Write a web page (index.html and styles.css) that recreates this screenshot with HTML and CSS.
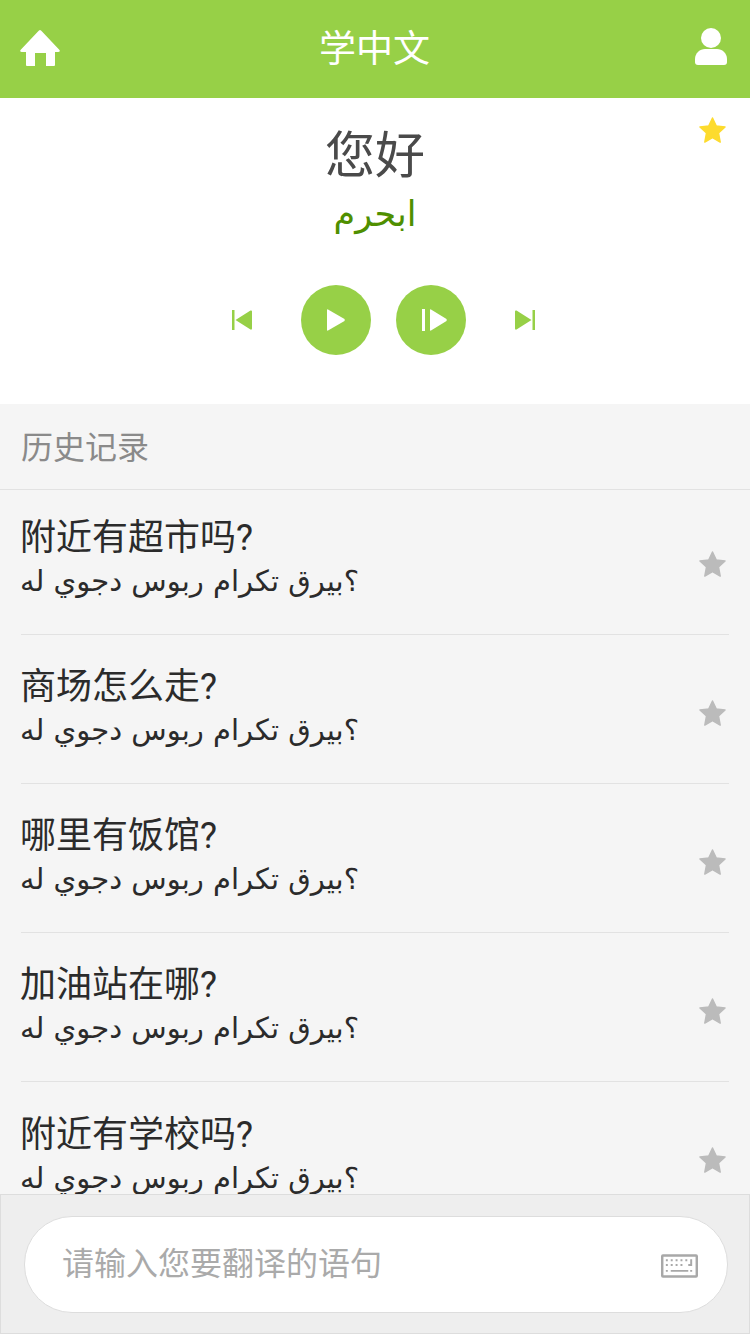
FILE: index.html
```html
<!DOCTYPE html>
<html lang="zh-CN">
<head>
  <meta charset="UTF-8">
  <title>学中文</title>
  <link rel="stylesheet" href="styles.css">
</head>
<body>
  <header class="topbar">
    <svg class="home-icon" viewBox="0 0 40 36"><path d="M20 0 Q21 0 22 1.500 L39.500 20 Q40.500 22 38 22 L35 22 L35 35 Q35 36 34 36 L26 36 L26 23 L15 23 L15 36 L7 36 Q6 36 6 35 L6 22 L2 22 Q-.5 22 .5 20 L18 1.500 Q19 0 20 0 Z" fill="#fff"/></svg>
    <h1 class="topbar-title">学中文</h1>
    <svg class="user-icon" viewBox="0 0 34 38"><ellipse cx="17" cy="10" rx="10" ry="10" fill="#fff"/><path d="M1 31 C1 25 6 21 11 21 L23 21 C28 21 33 25 33 31 L33 34 Q33 37 30 37 L4 37 Q1 37 1 34 Z" fill="#fff"/></svg>
  </header>

  <section class="current">
    <svg class="star star-on" viewBox="-1 -1 28 28"><path d="M13 0 L16.800 8.200 L26 9.400 L19.200 15.500 L21 25 L13 20.400 L5 25 L6.800 15.500 L0 9.400 L9.200 8.200 Z"/></svg>
    <div class="word">您好</div>
    <div class="word-ar arabic">مرحبا</div>
    <div class="controls">
      <svg class="skip" viewBox="0 0 20 20"><path d="M0 0 H2.500 V20 H0 Z M3.500 10 L18.500 .5 Q20 0 20 1.500 V18.500 Q20 20 18.500 19.500 Z"/></svg>
      <button class="round-btn"><svg viewBox="0 0 18 22"><path d="M0 1 Q0 0 1 .5 L17.500 10 Q18 11 17.500 12 L1 21.500 Q0 22 0 21 Z"/></svg></button>
      <button class="round-btn"><svg class="wide" viewBox="0 0 25 22"><path d="M0 0 H3 V22 H0 Z M8 1 Q8 0 9 .5 L24.500 10 Q25 11 24.500 12 L9 21.500 Q8 22 8 21 Z"/></svg></button>
      <svg class="skip" viewBox="0 0 20 20"><path d="M20 0 H17.500 V20 H20 Z M16.500 10 L1.500 .5 Q0 0 0 1.500 V18.500 Q0 20 1.500 19.500 Z"/></svg>
    </div>
  </section>

  <section class="history">
    <div class="history-head">历史记录</div>
    <ul class="history-list">
      <li class="row">
        <div class="row-text"><div class="row-cn">附近有超市吗?</div><div class="row-ar arabic">هل يوجد سوبر ماركت قريب؟</div></div>
        <svg class="star" viewBox="-1 -1 28 28"><path d="M13 0 L16.800 8.200 L26 9.400 L19.200 15.500 L21 25 L13 20.400 L5 25 L6.800 15.500 L0 9.400 L9.200 8.200 Z"/></svg>
      </li>
      <li class="row">
        <div class="row-text"><div class="row-cn">商场怎么走?</div><div class="row-ar arabic">هل يوجد سوبر ماركت قريب؟</div></div>
        <svg class="star" viewBox="-1 -1 28 28"><path d="M13 0 L16.800 8.200 L26 9.400 L19.200 15.500 L21 25 L13 20.400 L5 25 L6.800 15.500 L0 9.400 L9.200 8.200 Z"/></svg>
      </li>
      <li class="row">
        <div class="row-text"><div class="row-cn">哪里有饭馆?</div><div class="row-ar arabic">هل يوجد سوبر ماركت قريب؟</div></div>
        <svg class="star" viewBox="-1 -1 28 28"><path d="M13 0 L16.800 8.200 L26 9.400 L19.200 15.500 L21 25 L13 20.400 L5 25 L6.800 15.500 L0 9.400 L9.200 8.200 Z"/></svg>
      </li>
      <li class="row">
        <div class="row-text"><div class="row-cn">加油站在哪?</div><div class="row-ar arabic">هل يوجد سوبر ماركت قريب؟</div></div>
        <svg class="star" viewBox="-1 -1 28 28"><path d="M13 0 L16.800 8.200 L26 9.400 L19.200 15.500 L21 25 L13 20.400 L5 25 L6.800 15.500 L0 9.400 L9.200 8.200 Z"/></svg>
      </li>
      <li class="row">
        <div class="row-text"><div class="row-cn">附近有学校吗?</div><div class="row-ar arabic">هل يوجد سوبر ماركت قريب؟</div></div>
        <svg class="star" viewBox="-1 -1 28 28"><path d="M13 0 L16.800 8.200 L26 9.400 L19.200 15.500 L21 25 L13 20.400 L5 25 L6.800 15.500 L0 9.400 L9.200 8.200 Z"/></svg>
      </li>
    </ul>
  </section>

  <footer class="inputbar">
    <div class="input-box">
      <span class="placeholder">请输入您要翻译的语句</span>
      <svg class="kbd-icon" viewBox="0 0 38 24" fill="#a8a8a8">
        <path d="M2 0 H36 Q38 0 38 2 V22 Q38 24 36 24 H2 Q0 24 0 22 V2 Q0 0 2 0 Z M2.500 2.500 V21.500 H35.500 V2.500 Z" fill-rule="evenodd"/>
        <path d="M5 5 h2 v2 h-2 Z M10 5 h2 v2 h-2 Z M15 5 h2 v2 h-2 Z M20 5 h2 v2 h-2 Z M25 5 h2 v2 h-2 Z M30 5 h2 v7 h-4 v-2 h2 Z M5 10 h2 v2 h-2 Z M10 10 h2 v2 h-2 Z M15 10 h2 v2 h-2 Z M20 10 h2 v2 h-2 Z M5 16 h2 v2 h-2 Z M10 16 h18 v2 h-18 Z M30 16 h2 v2 h-2 Z"/>
      </svg>
    </div>
  </footer>
</body>
</html>
```

FILE: styles.css
```css
* {
  box-sizing: border-box;
}

body {
  display: flex;
  flex-direction: column;
  width: 750px;
  height: 1334px;
  margin: 0;
  overflow: hidden;
  font-family: "Roboto", "Noto Sans CJK SC", sans-serif;
  background-color: #fff;
}

.arabic {
  font-family: "DejaVu Sans", "Noto Sans", sans-serif;
  direction: ltr;
  unicode-bidi: bidi-override; /* the app draws its arabic letters left to right */
  white-space: nowrap;
}

.topbar {
  display: flex;
  flex: none;
  align-items: center;
  justify-content: space-between;
  height: 98px;
  padding: 0 22px 0 20px;
  background-color: #97d047;
}

.topbar-title {
  margin: 2px 5px 0 0;
  font-size: 37px;
  font-weight: normal;
  line-height: 48px;
  color: #fff;
}

.home-icon {
  width: 40px;
  height: 36px;
  margin-bottom: 2px;
}

.user-icon {
  width: 34px;
  height: 38px;
  margin-bottom: 4px;
}

.current {
  position: relative;
  flex: none;
  height: 306px;
  padding-top: 27px;
  text-align: center;
  background-color: #fff;
}

.word {
  font-size: 50px;
  line-height: 62px;
  color: #4a4a4a;
}

.word-ar {
  margin-top: 3px;
  font-size: 35px;
  line-height: 48px;
  color: #4f8f00;
}

.controls {
  display: flex;
  align-items: center;
  justify-content: center;
  gap: 25px;
  margin-top: 47px;
  padding-left: 16px;
}

.skip {
  width: 20px;
  height: 20px;
  margin: 0 24px;
  fill: #97d047;
}

.round-btn {
  display: flex;
  align-items: center;
  justify-content: center;
  width: 70px;
  height: 70px;
  padding: 0;
  border: none;
  border-radius: 50%;
  background-color: #97d047;
}

.round-btn svg {
  width: 18px;
  height: 22px;
  fill: #fff;
}

.round-btn svg.wide {
  width: 25px;
  margin-left: 8px;
}

.star {
  flex: none;
  width: 27px;
  height: 27px;
  fill: #bbb;
  stroke: #bbb;
  stroke-width: 1.500;
  stroke-linejoin: round;
}

.star-on {
  position: absolute;
  top: 19px;
  right: 24px;
  fill: #fddb2e;
  stroke: #fddb2e;
}

.history {
  flex: 1;
  min-height: 0;
  overflow: hidden;
  background-color: #f5f5f5;
}

.history-head {
  height: 86px;
  padding-left: 21px;
  font-size: 32px;
  line-height: 88px;
  color: #8a8a8a;
  border-bottom: 1px solid #e2e2e2;
}

.history-list {
  margin: 0;
  padding: 0 21px;
  list-style: none;
}

.row {
  display: flex;
  align-items: center;
  justify-content: space-between;
  height: 149px;
  padding: 8px 3px 0 0;
  border-bottom: 1px solid #e2e2e2;
}

.row:first-child {
  height: 145px;
  padding-top: 4px;
}

.row:last-child {
  border-bottom: none;
}

.row-text {
  margin: 0 0 16px -1px;
}

.row-cn {
  font-size: 36px;
  line-height: 50px;
  color: #2b2b2b;
}

.row-ar {
  font-size: 29px;
  line-height: 36px;
  color: #2b2b2b;
}

.inputbar {
  flex: none;
  height: 140px;
  padding: 21px 21px 20px 23px;
  background-color: #eee;
  border: 1px solid #ddd;
}

.input-box {
  display: flex;
  align-items: center;
  justify-content: space-between;
  height: 97px;
  padding: 0 29px 0 37px;
  background-color: #fff;
  border: 1px solid #ddd;
  border-radius: 48px;
}

.placeholder {
  margin-bottom: 8px;
  font-size: 32px;
  color: #aaa;
}

.kbd-icon {
  width: 37px;
  height: 24px;
  margin-top: 2px;
}
```
